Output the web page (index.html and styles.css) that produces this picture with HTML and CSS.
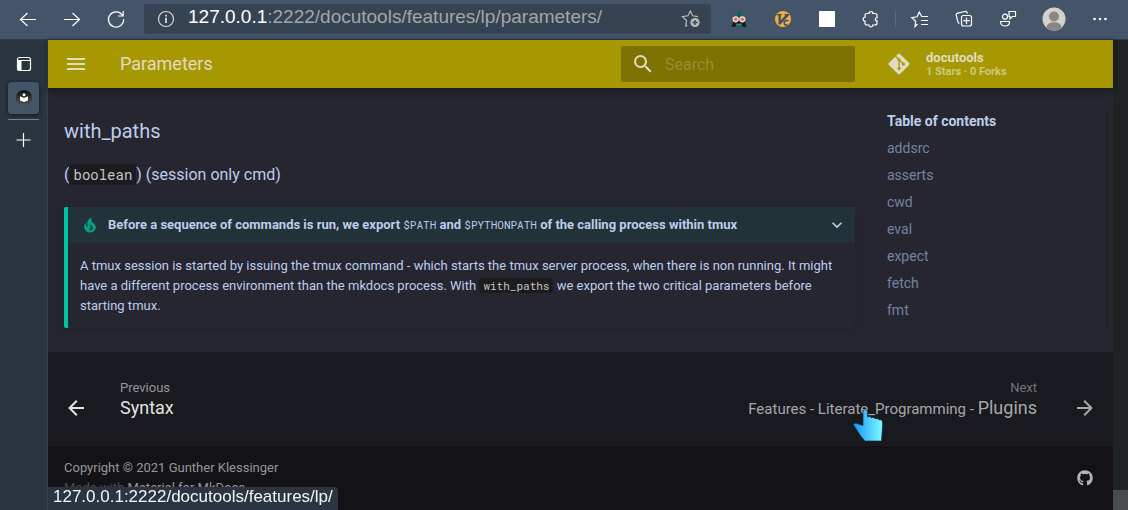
FILE: index.html
```html
<!DOCTYPE html>
<html lang="en">
<head>
<meta charset="utf-8">
<title>Parameters - docutools</title>
<meta name="viewport" content="width=device-width, initial-scale=1">
<link rel="stylesheet" href="styles.css">
</head>
<body>
<div class="toolbar">
  <button class="tool" aria-label="Back"><svg class="i24" viewBox="0 0 24 24"><path class="line" d="M20 12.500H4.500M11.500 6 4.500 12.500 11.500 19"/></svg></button>
  <button class="tool" aria-label="Forward"><svg class="i24" viewBox="0 0 24 24"><path class="line" d="M4 12.500H19.500M12.500 6l7 6.500-7 6.500"/></svg></button>
  <button class="tool" aria-label="Reload"><svg class="i24" viewBox="0 0 24 24"><path class="line" d="M18.500 8.500A7.600 7.600 0 1 0 19.600 12M19.200 4v5h-5"/></svg></button>
  <div class="address">
    <svg class="i24 info" viewBox="0 0 24 24"><circle class="line" cx="12" cy="12" r="7.500"/><path class="thick" d="M12 10.700v5.300M12 7.800v1.700"/></svg>
    <span class="url"><b>127.0.0.1</b>:2222/docutools/features/lp/parameters/</span>
    <button class="fav" aria-label="Add to favorites"><svg class="i24" viewBox="0 0 24 24"><path class="line" d="m8.500 18.500-1.700.4.7-5.400-4-3.900 5.400-.8L11.300 4l2.400 4.800 5.300.9"/><circle cx="16" cy="15.500" r="4.600" fill="#b9babb"/><path d="M16 13v5M13.500 15.500h5" stroke="#364352" stroke-width="1.400"/></svg></button>
  </div>
  <div class="tools">
    <button class="tool" aria-label="Dark reader"><svg class="i24" viewBox="0 0 24 24"><path d="M6.300 12.500C6 7.500 8.500 4.500 12 4.500s6 3 5.700 8l1.800 7h-15z" fill="#1c6273"/><path d="M11.300 4.500h1.400v6h-1.400z" fill="#174755"/><path d="M4.500 19.800 6.500 14h11l2 5.800h-4l-1-2.800h-5l-1 2.800z" fill="#17191f"/><circle cx="8.700" cy="12.300" r="3.100" fill="#f6dfd6"/><circle cx="15.300" cy="12.300" r="3.100" fill="#f6dfd6"/><circle cx="8.700" cy="12.300" r="1.800" fill="#e4694e"/><circle cx="15.300" cy="12.300" r="1.800" fill="#e4694e"/><path d="M9.500 16.500h1V18h-1zM11.500 16.500h1V18h-1zM13.500 16.500h1V18h-1z" fill="#8899a2"/></svg></button>
    <button class="tool" aria-label="Vimium C"><svg class="i24" viewBox="0 0 24 24"><circle cx="12" cy="12" r="8" fill="#f0ae42"/><path d="M5.500 7h5.200v1.200h-.9v5L14.500 8.200h-1V7H18v1.200L9.500 17.500H7.500V8.200h-2z" fill="#3f5166"/><path d="M17.500 13.800c-2.400-1-4.300.2-4.300 2.200s2 2.600 3.500 1.700" fill="none" stroke="#3f5166" stroke-width="1.500"/></svg></button>
    <button class="tool" aria-label="Extension"><span class="white-box"></span></button>
    <button class="tool" aria-label="Extensions"><svg class="i24" viewBox="0 0 24 24"><path class="line" d="M8 6.500h2c-.6-2.600 4.400-2.600 3.800 0H16q2 0 2 2v2.300c-2.200-.7-2.200 3.600 0 3V16q0 2-2 2h-2.200c.6 2.400-4.400 2.400-3.800 0H8q-2 0-2-2v-2c-2.400.5-2.400-4.200 0-3.700V8.500q0-2 2-2z"/></svg></button>
    <span class="divider"></span>
    <button class="tool" aria-label="Favorites"><svg class="i24" viewBox="0 0 24 24"><path class="line" d="M9.500 17 7 19.500l.6-5.200-3.800-3.700 5.300-.8L11.300 5l2.400 4.500H20M13 13.500h7M13 17.500h7"/></svg></button>
    <button class="tool" aria-label="Collections"><svg class="i24" viewBox="0 0 24 24"><rect class="line" x="9.500" y="8.500" width="10" height="10.500" rx="2"/><path class="line" d="M14.500 10.500v6.500M11.300 13.700h6.500M7.500 16.500C6 16 5.500 15 5.500 13L4.300 8.500c-.3-1.300.2-2 1.500-2.300L13 4.500c1.500-.3 2 .3 2.500 2"/></svg></button>
    <button class="tool" aria-label="Share"><svg class="i24" viewBox="0 0 24 24"><circle class="line" cx="9" cy="9.700" r="2.500"/><path class="line" d="M4.500 14.500h9c0 6-9 6-9 0zM13 4.500h6.500v5h-3L14 11.800V9.500h-1z"/></svg></button>
    <button class="tool profile" aria-label="Profile"><svg class="i24" viewBox="0 0 24 24"><circle cx="12" cy="12" r="11.500" fill="#d3d1ce"/><circle cx="12" cy="9.500" r="5" fill="#8b8683"/><path d="M4.500 20.500c0-7 15-7 15 0-4 4-11 4-15 0z" fill="#8b8683"/></svg></button>
    <button class="tool" aria-label="Settings and more"><svg class="i24" viewBox="0 0 24 24"><g fill="#fff"><circle cx="6.500" cy="12" r="1.300"/><circle cx="12" cy="12" r="1.300"/><circle cx="17.500" cy="12" r="1.300"/></g></svg></button>
  </div>
</div>
<div class="window">
  <div class="tabs">
    <button class="tab" aria-label="Tab menu"><svg class="i24" viewBox="0 0 24 24"><rect x="5.500" y="5.500" width="13" height="13" rx="2" fill="none" stroke="#fff" stroke-width="1.200"/><path d="M5.500 8.500h4v10h-4zM5.500 8h13v1h-13z" fill="#fff"/></svg></button>
    <button class="tab active" aria-label="Parameters - docutools"><svg class="i24" viewBox="0 0 24 24"><defs><linearGradient id="disc" x2="0" y2="1"><stop stop-color="#111"/><stop offset="1" stop-color="#555"/></linearGradient></defs><circle cx="12" cy="12" r="8" fill="url(#disc)"/><circle cx="12" cy="8.800" r="1.500" fill="#fff"/><path d="M8 10.300 12 12l4-1.700v4.200L12 16l-4-1.500z" fill="#fff"/></svg></button>
    <span class="rule"></span>
    <button class="tab" aria-label="New tab"><svg class="i24" viewBox="0 0 24 24"><path d="M11.500 5v14M4.500 12h14" stroke="#fff" stroke-width="1.200"/></svg></button>
  </div>
  <div class="page">
    <header class="header">
      <button class="menu" aria-label="Menu"><svg class="i24" viewBox="0 0 24 24"><path d="M3 6h18v2H3V6m0 5h18v2H3v-2m0 5h18v2H3v-2z"/></svg></button>
      <span class="title">Parameters</span>
      <label class="search"><svg class="i24" viewBox="0 0 24 24"><path d="M9.500 3A6.500 6.500 0 0 1 16 9.500c0 1.610-.59 3.090-1.560 4.230l.27.27h.79l5 5-1.500 1.500-5-5v-.79l-.27-.27A6.516 6.516 0 0 1 9.500 16 6.500 6.500 0 0 1 3 9.500 6.500 6.500 0 0 1 9.500 3m0 2C7 5 5 7 5 9.500S7 14 9.500 14 14 12 14 9.500 12 5 9.500 5z"/></svg><input type="text" placeholder="Search" aria-label="Search"></label>
      <a class="source" href="#">
        <svg class="i24" viewBox="0 0 448 512"><path d="M439.550 236.050 244 40.450a28.870 28.870 0 0 0-40.810 0l-40.660 40.630 51.520 51.520c27.060-9.140 52.680 16.770 43.390 43.680l49.660 49.660c34.230-11.800 61.180 31 35.470 56.690-26.490 26.490-70.210-2.870-56-37.340L240.220 199v121.850c25.300 12.540 22.260 41.850 9.080 55a34.340 34.340 0 0 1-48.550 0c-17.570-17.600-11.070-46.910 11.250-56v-123c-20.800-8.510-24.600-30.740-18.640-45L142.570 101 8.450 235.140a28.860 28.860 0 0 0 0 40.810l195.610 195.600a28.860 28.860 0 0 0 40.800 0l194.690-194.690a28.860 28.860 0 0 0 0-40.810z"/></svg>
        <span class="repo">docutools<small>1 Stars · 0 Forks</small></span>
      </a>
    </header>
    <div class="columns">
      <main class="content">
        <h3>with_paths</h3>
        <p class="type">(<code>boolean</code>) (session only cmd)</p>
        <details class="tip" open>
          <summary>
            <svg class="flame" viewBox="0 0 24 24"><path d="M17.660 11.200c-.23-.3-.51-.56-.77-.82-.67-.6-1.430-1.030-2.070-1.660C13.330 7.260 13 4.850 13.950 3c-.95.23-1.780.75-2.490 1.320-2.590 2.080-3.610 5.750-2.390 8.900.04.1.08.2.08.33 0 .22-.15.42-.35.5-.23.1-.47.04-.66-.12a.58.58 0 0 1-.14-.17c-1.130-1.430-1.310-3.480-.55-5.120C5.780 10 4.870 12.300 5 14.470c.06.5.12 1 .29 1.500.14.6.41 1.200.71 1.730 1.080 1.730 2.950 2.970 4.960 3.220 2.140.27 4.430-.12 6.070-1.600 1.830-1.660 2.470-4.320 1.530-6.600l-.13-.26c-.21-.46-.77-1.260-.77-1.260m-3.160 6.300c-.28.24-.74.5-1.100.6-1.120.4-2.240-.16-2.900-.82 1.190-.28 1.900-1.160 2.110-2.050.17-.8-.15-1.460-.28-2.230-.12-.74-.1-1.370.17-2.060.19.38.39.76.63 1.060.77 1 1.980 1.440 2.240 2.800.04.14.06.28.06.43.03.82-.33 1.720-.93 2.270z"/></svg>
            <span class="lead">Before a sequence of commands is run, we export <code>$PATH</code> and <code>$PYTHONPATH</code> of the calling process within tmux</span>
            <svg class="chevron" viewBox="0 0 24 24"><path d="M7.410 8.580 12 13.170l4.590-4.590L18 10l-6 6-6-6 1.410-1.420z"/></svg>
          </summary>
          <p>A tmux session is started by issuing the tmux command - which starts the tmux server process, when there is non running. It might have a different process environment than the mkdocs process. With <code>with_paths</code> we export the two critical parameters before starting tmux.</p>
        </details>
      </main>
      <nav class="toc" aria-label="Table of contents">
        <div class="toc-list">
          <strong>Table of contents</strong>
          <a href="#">addsrc</a>
          <a href="#">asserts</a>
          <a href="#">cwd</a>
          <a href="#">eval</a>
          <a href="#">expect</a>
          <a href="#">fetch</a>
          <a href="#">fmt</a>
        </div>
      </nav>
    </div>
    <footer>
      <nav class="pager" aria-label="Footer">
        <a class="prev" href="#"><svg class="i24" viewBox="0 0 24 24"><path d="M20 11v2H8l5.500 5.500-1.420 1.420L4.160 12l7.920-7.920L13.500 5.500 8 11h12z"/></svg><span><small>Previous</small>Syntax</span></a>
        <a class="next" href="#"><span><small>Next</small><span class="crumb">Features - Literate_Programming - </span>Plugins</span><svg class="i24" viewBox="0 0 24 24"><path d="M4 11v2h12l-5.500 5.500 1.420 1.420L19.840 12l-7.920-7.920L10.500 5.500 16 11H4z"/></svg></a>
      </nav>
      <div class="meta">
        <div class="copyright">Copyright © 2021 Gunther Klessinger<div class="made">Made with <a href="#">Material for MkDocs</a></div></div>
        <a class="social" href="#" aria-label="GitHub"><svg viewBox="0 0 496 512"><path d="M244.800 8C106.100 8 0 113.300 0 252c0 110.900 69.800 205.800 169.500 239.200 12.800 2.300 17.300-5.600 17.300-12.100 0-6.200-.3-40.400-.3-61.400 0 0-70 15-84.700-29.800 0 0-11.400-29.100-27.800-36.600 0 0-22.900-15.700 1.600-15.400 0 0 24.900 2 38.600 25.800 21.900 38.600 58.600 27.500 72.900 20.900 2.300-16 8.800-27.100 16-33.700-55.900-6.200-112.300-14.300-112.300-110.500 0-27.500 7.600-41.300 23.600-58.900-2.600-6.500-11.100-33.300 2.600-67.900 20.900-6.500 69 27 69 27 20-5.600 41.500-8.500 62.800-8.500s42.800 2.900 62.800 8.500c0 0 48.100-33.600 69-27 13.700 34.700 5.200 61.400 2.600 67.900 16 17.700 25.800 31.500 25.800 58.900 0 96.500-58.900 104.200-114.800 110.500 9.200 7.900 17 22.900 17 46.400 0 33.700-.3 75.400-.3 83.600 0 6.500 4.600 14.400 17.300 12.100C428.200 457.800 496 362.900 496 252 496 113.300 383.500 8 244.800 8z"/></svg></a>
      </div>
    </footer>
  </div>
  <div class="scrollbar"><span></span></div>
</div>
<div class="status">127.0.0.1:2222/docutools/features/lp/</div>
<svg class="pointer" viewBox="0 0 32 34"><defs><linearGradient id="hand" x2="1" y2="0"><stop stop-color="#1495ff"/><stop offset="1" stop-color="#7ffbff"/></linearGradient></defs><path fill="url(#hand)" stroke="#10242c" stroke-width=".6" d="M10 4c0-3.500 4.500-3.500 4.500 0v5c1.500-1 3.500-.5 4 1 1.500-1 3.500-.5 4 1 1.500-.8 3.200-.2 3.700 1 1.800-.8 3.300.3 3.300 2.300 0 8-.7 12-1 18.700H12L8 28.500.5 17c-.3-2 3-2.500 5-1l4.500 1.500z"/></svg>
</body>
</html>
```

FILE: styles.css
```css
* { box-sizing: border-box; }
body {
  margin: 0;
  height: 100vh;
  overflow: hidden;
  display: flex;
  flex-direction: column;
  background: #131317;
  font-family: Roboto, sans-serif;
}
button { margin: 0; padding: 0; border: 0; background: none; color: inherit; font: inherit; }
a { color: inherit; text-decoration: none; }
svg { display: block; fill: currentColor; }
h3, p { margin: 0; font-weight: 400; }
.i24 { width: 24px; height: 24px; flex: none; }
.line { fill: none; stroke: currentColor; stroke-width: 1.2; }
.thick { fill: none; stroke: currentColor; stroke-width: 1.8; }

/* browser toolbar */
.toolbar {
  display: flex;
  align-items: center;
  flex: none;
  height: 40px;
  padding: 0 6px 1px;
  border-bottom: 1px solid #2e3b50;
  background: #445469;
  color: #fff;
}
.tool { width: 44px; height: 38px; display: flex; align-items: center; justify-content: center; }
.profile { width: 48px; }
.address {
  flex: 1;
  min-width: 0;
  display: flex;
  align-items: center;
  height: 30px;
  margin: 0 6px;
  padding: 0 8px 0 10px;
  border-radius: 3px;
  background: #364353;
}
.info { color: #d6d8da; }
.url {
  flex: 1;
  padding: 0 10px 4px;
  color: #a3a6a8;
  font: 19px/24px "Liberation Sans", Arial, sans-serif;
  white-space: nowrap;
}
.url b { color: #fff; font-weight: 400; }
.fav { color: #b9babb; }
.tools { display: flex; align-items: center; }
.white-box { width: 16px; height: 16px; background: #fff; }
.divider { width: 1px; height: 16px; margin: 0 2px; background: #66696e; }

.window { flex: 1; min-height: 0; display: flex; }

/* vertical tabs */
.tabs {
  flex: none;
  width: 48px;
  padding: 8px 8px 0;
  background: #2a3540;
  border-right: 1px solid #35414d;
}
.tab { width: 100%; height: 32px; display: flex; align-items: center; justify-content: center; }
.tab.active { margin-top: 2px; border-radius: 4px; background: #445469; box-shadow: 0 1px 4px #10171d; }
.rule { display: block; height: 1px; margin: 5px 0 4px; background: #77808a; }

/* page */
.page { flex: 1; min-width: 0; display: flex; flex-direction: column; background: #262631; color: #bccdec; }
.header {
  flex: none;
  display: flex;
  align-items: center;
  height: 48px;
  padding-left: 16px;
  background: #a79700;
  color: #e0dcc1;
  box-shadow: 0 0 4px rgba(0, 0, 0, .3), 0 4px 8px rgba(0, 0, 0, .2);
  z-index: 1;
}
.title { flex: 1; padding: 0 0 2px 32px; font-size: 18px; }
.search {
  display: flex;
  align-items: center;
  width: 234px;
  height: 36px;
  padding: 0 10px;
  border-radius: 2px;
  background: #7d7100;
}
.search input {
  flex: 1;
  min-width: 0;
  padding: 1px 10px 0;
  border: 0;
  outline: 0;
  background: none;
  color: inherit;
  font: 16px/24px Roboto, sans-serif;
}
.search input::placeholder { color: #988d35; opacity: 1; }
.source { display: flex; align-items: center; width: 258px; padding-left: 32px; font-size: 13px; font-weight: 700; line-height: 16px; }
.repo { padding: 0 0 1px 15px; }
.repo small { display: block; font-size: 11px; line-height: 12px; color: #d0c87e; }

.columns { flex: 1; display: grid; grid-template-columns: minmax(0, 1fr) 242px; }
.content { padding: 28px 16px 0; }
.content h3 { font-size: 20px; line-height: 30px; }
.type { margin-top: 16px; font-size: 16px; line-height: 26px; }
code {
  padding: 0 4px;
  border-radius: 2px;
  background: #1b1c22;
  color: #c9c7b9;
  font-family: "Roboto Mono", "DejaVu Sans Mono", monospace;
}
.type code { padding: 1px 4px; font-size: 14px; }
.tip {
  margin-top: 19px;
  border-left: 4px solid #00c3a4;
  border-radius: 2px;
  font-size: 13px;
  line-height: 20px;
  box-shadow: 0 4px 10px rgba(0, 0, 0, .08), 0 0 1px rgba(0, 0, 0, .15);
}
.tip summary {
  display: flex;
  align-items: center;
  height: 36px;
  padding: 0 8px 0 12px;
  background: #213238;
  font-weight: 700;
  list-style: none;
}
.tip p { padding: 13px 12px 12px; }
.tip code { font-size: 11px; }
.tip summary code { padding: 0; background: none; color: inherit; font-weight: 400; }
.lead { flex: 1; padding-left: 8px; }
.flame { width: 20px; height: 20px; color: #04a188; }
.chevron { width: 20px; height: 20px; }

.toc { padding: 24px 4px 0 16px; }
.toc-list {
  display: flex;
  flex-direction: column;
  height: 216px;
  border-right: 3px solid #202325;
  font-size: 14px;
  line-height: 18px;
}
.toc-list a { margin-top: 9px; color: #7384a0; }

/* page footer */
footer { flex: none; height: 158px; background: #131317; }
.pager { display: flex; justify-content: space-between; height: 94px; padding: 26px 16px 0; background: #181a1f; font-size: 18px; line-height: 20px; }
.pager a { display: flex; align-items: flex-end; height: 40px; }
.pager small { display: block; font-size: 13px; }
.pager .i24 { margin-bottom: -2px; }
.prev { gap: 32px; color: #e3e2df; }
.prev small { color: #96979a; }
.next { gap: 36px; color: #a7a8a8; text-align: right; }
.next small { color: #737579; }
.crumb { font-size: 15px; line-height: 16px; }
.meta { display: flex; justify-content: space-between; padding: 12px 20px 0 16px; font-size: 13px; line-height: 20px; color: #97979a; }
.made { color: #4b4b4e; }
.made a { color: #97979a; }
.social { padding-top: 12px; color: #b2b2b1; }
.social svg { width: 16px; height: 16px; }

.scrollbar { flex: none; display: flex; flex-direction: column; justify-content: flex-end; width: 15px; background: #1f2323; }
.scrollbar span { height: 20px; background: #484c4e; }

/* overlays */
.status {
  position: fixed;
  left: 48px;
  bottom: 0;
  z-index: 2;
  padding: 0 5px 3px;
  border-radius: 0 4px 0 0;
  background: #2a3541;
  color: #f3f4f5;
  font: 17px/20px "Liberation Sans", Arial, sans-serif;
}
.pointer { position: fixed; left: 853px; top: 408px; z-index: 3; width: 32px; height: 34px; }
```
